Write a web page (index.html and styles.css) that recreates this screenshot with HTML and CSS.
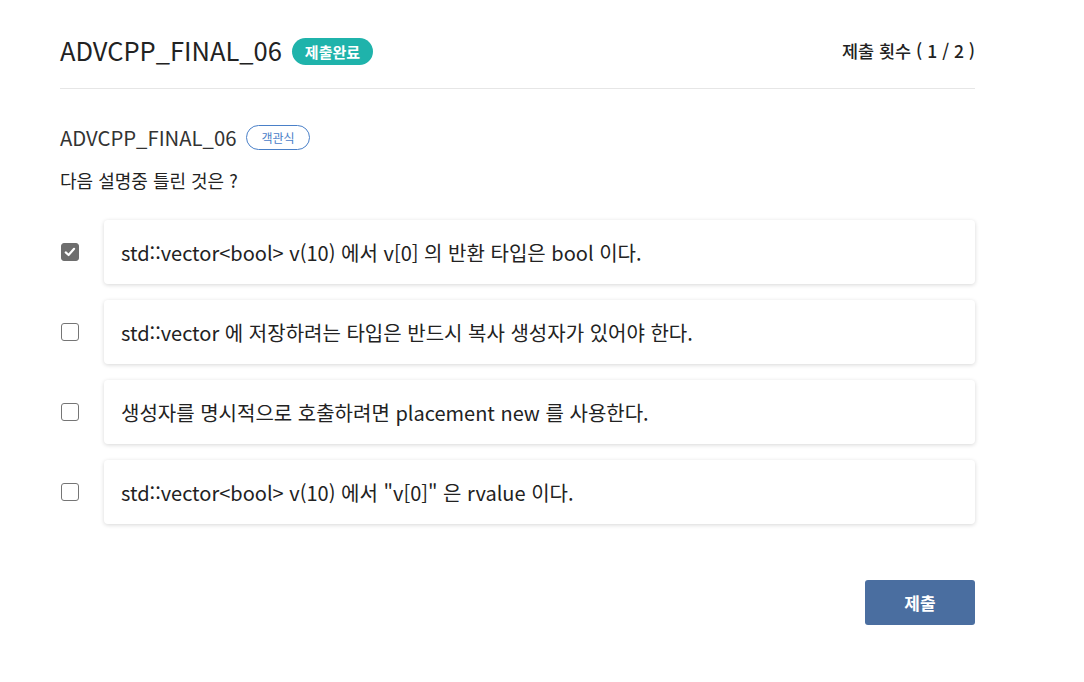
FILE: index.html
```html
<!DOCTYPE html>
<html lang="ko">
<head>
<meta charset="utf-8">
<link rel="stylesheet" href="styles.css">
</head>
<body>
<div class="page">
  <header class="head">
    <div class="head-left">
      <h1 class="title">ADVCPP_FINAL_06</h1>
      <span class="badge-done">제출완료</span>
    </div>
    <div class="count">제출 횟수 ( 1 / 2 )</div>
  </header>
  <section class="problem">
    <div class="sub">
      <h2 class="subtitle">ADVCPP_FINAL_06</h2>
      <span class="badge-type">객관식</span>
    </div>
    <p class="question">다음 설명중 틀린 것은 ?</p>
    <ul class="options">
      <li class="option">
        <span class="check checked"><svg viewBox="0 0 18 18" width="18" height="18"><path d="M4.2 9.4 L7.4 12.4 L13.6 5.4" fill="none" stroke="#fff" stroke-width="2.4" stroke-linecap="round" stroke-linejoin="round"/></svg></span>
        <div class="card">std::vector&lt;bool&gt; v(10) 에서 v[0] 의 반환 타입은 bool 이다.</div>
      </li>
      <li class="option">
        <span class="check"></span>
        <div class="card">std::vector 에 저장하려는 타입은 반드시 복사 생성자가 있어야 한다.</div>
      </li>
      <li class="option">
        <span class="check"></span>
        <div class="card">생성자를 명시적으로 호출하려면 placement new 를 사용한다.</div>
      </li>
      <li class="option">
        <span class="check"></span>
        <div class="card">std::vector&lt;bool&gt; v(10) 에서 "v[0]" 은 rvalue 이다.</div>
      </li>
    </ul>
    <div class="actions">
      <button class="submit">제출</button>
    </div>
  </section>
</div>
</body>
</html>
```
FILE: styles.css
```css
* { box-sizing: border-box; }
body {
  margin: 0;
  background: #fff;
  font-family: "Noto Sans CJK KR", "Noto Sans", sans-serif;
  color: #222;
}
.page {
  width: 915px;
  margin-left: 60px;
  padding-top: 32px;
}
.head {
  display: flex;
  justify-content: space-between;
  align-items: center;
  height: 36px;
}
.head-left {
  display: flex;
  align-items: center;
  gap: 10px;
}
.title {
  margin: 0;
  font-size: 25.5px;
  font-weight: 400;
  line-height: 36px;
  color: #222;
}
.badge-done {
  display: inline-flex;
  align-items: center;
  height: 27px;
  padding: 0 13px;
  border-radius: 14px;
  background: #1fb3ab;
  color: #fff;
  font-size: 15px;
  font-weight: 700;
  margin-top: 2px;
}
.count {
  font-size: 17.5px;
  font-weight: 500;
  color: #222;
}
.problem {
  border-top: 1px solid #e6e6e6;
  margin-top: 20px;
  padding-top: 34px;
}
.sub {
  display: flex;
  align-items: center;
  gap: 10px;
}
.subtitle {
  margin: 0;
  font-size: 20.3px;
  font-weight: 400;
  line-height: 28px;
  color: #333;
}
.badge-type {
  display: inline-flex;
  align-items: center;
  height: 25px;
  padding: 0 14px;
  border: 1px solid #4a80c8;
  border-radius: 13px;
  color: #4a80c8;
  font-size: 12px;
}
.question {
  margin: 16px 0 0;
  font-size: 18px;
  line-height: 26px;
  color: #222;
}
.options {
  list-style: none;
  margin: 27px 0 0;
  padding: 0;
  display: flex;
  flex-direction: column;
  gap: 16px;
}
.option {
  display: flex;
  align-items: center;
}
.check {
  width: 18px;
  height: 18px;
  margin-left: 1px;
  margin-right: 25px;
  border: 1.5px solid #757575;
  border-radius: 3px;
  background: #fff;
  flex: none;
  display: flex;
  align-items: center;
  justify-content: center;
}
.check.checked {
  background: #6e6e6e;
  border-color: #6e6e6e;
}
.check svg { display: block; }
.card {
  flex: 1;
  height: 64px;
  display: flex;
  align-items: center;
  padding-left: 17px;
  background: #fff;
  border-radius: 4px;
  box-shadow: 0 1px 4px rgba(0,0,0,0.16);
  font-size: 20px;
  color: #222;
}
.actions {
  display: flex;
  justify-content: flex-end;
  margin-top: 56px;
}
.submit {
  width: 110px;
  height: 45px;
  border: 0;
  border-radius: 3px;
  background: #4a6ea0;
  color: #fff;
  font-family: inherit;
  font-size: 17px;
  font-weight: 700;
}
```
